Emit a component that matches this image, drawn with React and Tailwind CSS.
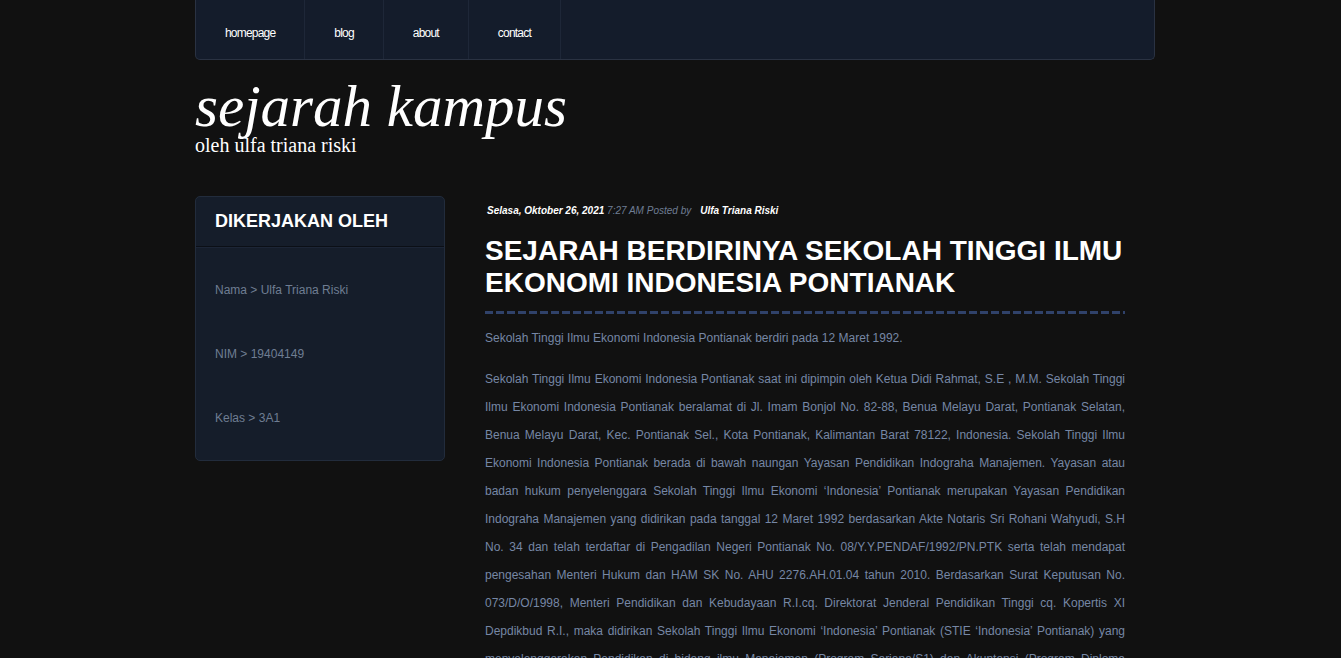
const navItems = ['homepage', 'blog', 'about', 'contact'];

const profile = [
  { label: 'Nama', value: 'Ulfa Triana Riski' },
  { label: 'NIM', value: '19404149' },
  { label: 'Kelas', value: '3A1' },
];

const body = `Sekolah Tinggi Ilmu Ekonomi Indonesia Pontianak saat ini dipimpin oleh Ketua Didi Rahmat, S.E , M.M. Sekolah Tinggi Ilmu Ekonomi Indonesia Pontianak beralamat di Jl. Imam Bonjol No. 82-88, Benua Melayu Darat, Pontianak Selatan, Benua Melayu Darat, Kec. Pontianak Sel., Kota Pontianak, Kalimantan Barat 78122, Indonesia. Sekolah Tinggi Ilmu Ekonomi Indonesia Pontianak berada di bawah naungan Yayasan Pendidikan Indograha Manajemen. Yayasan atau badan hukum penyelenggara Sekolah Tinggi Ilmu Ekonomi ‘Indonesia’ Pontianak merupakan Yayasan Pendidikan Indograha Manajemen yang didirikan pada tanggal 12 Maret 1992 berdasarkan Akte Notaris Sri Rohani Wahyudi, S.H No. 34 dan telah terdaftar di Pengadilan Negeri Pontianak No. 08/Y.Y.PENDAF/1992/PN.PTK serta telah mendapat pengesahan Menteri Hukum dan HAM SK No. AHU 2276.AH.01.04 tahun 2010. Berdasarkan Surat Keputusan No. 073/D/O/1998, Menteri Pendidikan dan Kebudayaan R.I.cq. Direktorat Jenderal Pendidikan Tinggi cq. Kopertis XI Depdikbud R.I., maka didirikan Sekolah Tinggi Ilmu Ekonomi ‘Indonesia’ Pontianak (STIE ‘Indonesia’ Pontianak) yang menyelenggarakan Pendidikan di bidang ilmu Manajemen (Program Sarjana/S1) dan Akuntansi (Program Diploma III/D3).`;

export default function App() {
  return (
    <div className="min-h-screen bg-[#111111] font-['Liberation_Sans',Arial,sans-serif]">
      <div className="w-[960px] ml-[195px]">
        {/* top navigation */}
        <nav className="h-[60px] bg-[#141c2b] border border-t-0 border-[#2a3242] rounded-b-[5px] flex">
          {navItems.map((item) => (
            <a
              key={item}
              href="#"
              className="h-full flex items-center pt-[6px] px-[29px] border-r border-[#1e2738] text-white text-[12px] tracking-[-0.8px]"
            >
              {item}
            </a>
          ))}
        </nav>

        {/* blog title */}
        <header className="pt-[18px] font-['Liberation_Serif',Georgia,serif] text-white">
          <h1 className="text-[59px] italic leading-[56px]">sejarah kampus</h1>
          <p className="text-[20px] leading-[20px] mt-[1px]">oleh ulfa triana riski</p>
        </header>

        <div className="flex gap-[40px] mt-[41px]">
          {/* sidebar */}
          <aside className="w-[250px] shrink-0 self-start bg-[#151d2a] border border-[#222c3c] rounded-[5px]">
            <h2 className="h-[50px] flex items-center px-[19px] text-white text-[18px] font-bold border-b border-[#0b0f16]">
              DIKERJAKAN OLEH
            </h2>
            <ul className="pt-[10px] pb-[10px] border-t border-[#1c2536]">
              {profile.map((p) => (
                <li key={p.label} className="h-[64px] flex items-center px-[19px] text-[12px] text-[#6f7d93]">
                  {p.label} &gt; {p.value}
                </li>
              ))}
            </ul>
          </aside>

          {/* post */}
          <main className="w-[640px]">
            <div className="pt-[8px] pl-[2px] text-[10px] leading-[14px] italic font-bold">
              <span className="text-white">Selasa, Oktober 26, 2021</span>{' '}
              <span className="text-[#6f7d93] font-normal">7:27 AM Posted by</span>
              <span className="text-white ml-[9px]">Ulfa Triana Riski</span>
            </div>
            <h2 className="mt-[17px] text-white text-[28px] leading-[32px] font-bold uppercase">
              Sejarah Berdirinya Sekolah Tinggi Ilmu Ekonomi Indonesia Pontianak
            </h2>
            <div className="mt-[12px] h-[3px] bg-[repeating-linear-gradient(90deg,#30426a_0_8px,transparent_8px_11px)]" />
            <div className="mt-[10px] text-[12px] leading-[28px] text-[#7687a5]">
              <p className="mb-[13px]">Sekolah Tinggi Ilmu Ekonomi Indonesia Pontianak berdiri pada 12 Maret 1992.</p>
              <p className="text-justify">{body}</p>
            </div>
          </main>
        </div>
      </div>
    </div>
  );
}
